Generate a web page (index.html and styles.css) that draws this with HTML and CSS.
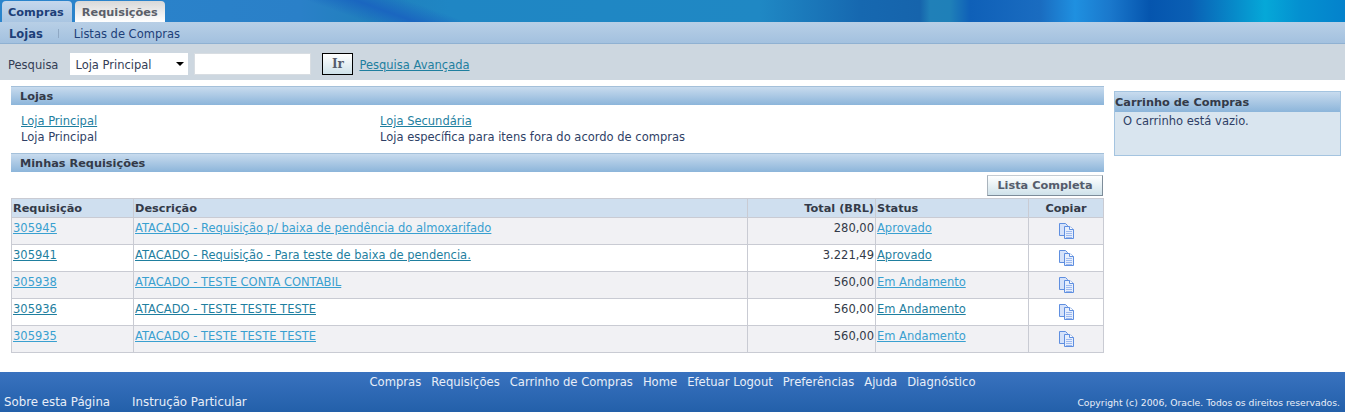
FILE: index.html
```html
<!doctype html>
<html>
    <head>
        <meta http-equiv="Content-Type" content="text/html; charset=utf-8">
        <title>Compras</title>
        <link rel="stylesheet" href="styles.css">
    </head>
    <body>
        <svg class="sprites" width="0" height="0">
            <symbol id="copy" viewBox="0 0 15 16">
                <path d="M.5.500h6l2 2v10h-8z" fill="#d5e2fa" stroke="#5f8fe0"/>
                <path d="M5.500 3.500h5l4 3v9h-9z" fill="#e6eefc" stroke="#5f8fe0"/>
                <path d="M10.500 3.500v3h4" fill="#fff" stroke="#5f8fe0"/>
                <path d="M7 8.500h6M7 10.500h6M7 12.500h6M7 14.500h6" stroke="#9db9ee"/>
            </symbol>
        </svg>
        <div class="top">
            <a class="tab tab-on">Compras</a>
            <a class="tab">Requisições</a>
        </div>
        <div class="subnav">
            <a class="sub-on">Lojas</a>
            <span class="sep"></span>
            <a>Listas de Compras</a>
        </div>
        <div class="search">
            <label>Pesquisa</label>
            <div class="select">Loja Principal<span class="arrow"></span></div>
            <input class="field" type="text">
            <button class="go">Ir</button>
            <a class="link">Pesquisa Avançada</a>
        </div>
        <div class="main">
            <div class="content">
                <h2 class="head">Lojas</h2>
                <div class="stores">
                    <div class="store">
                        <a class="link">Loja Principal</a>
                        <p>Loja Principal</p>
                    </div>
                    <div class="store">
                        <a class="link">Loja Secundária</a>
                        <p>Loja específica para itens fora do acordo de compras</p>
                    </div>
                </div>
                <h2 class="head">Minhas Requisições</h2>
                <div class="actions">
                    <button class="full">Lista Completa</button>
                </div>
                <table class="reqs">
                    <colgroup>
                        <col class="c1"><col class="c2"><col class="c3"><col class="c4"><col class="c5">
                    </colgroup>
                    <tr>
                        <th>Requisição</th><th>Descrição</th><th class="num">Total (BRL)</th><th>Status</th><th class="mid">Copiar</th>
                    </tr>
                    <tr class="odd">
                        <td><a class="light">305945</a></td>
                        <td><a class="light">ATACADO - Requisição p/ baixa de pendência do almoxarifado</a></td>
                        <td class="num">280,00</td>
                        <td><a class="light">Aprovado</a></td>
                        <td class="mid"><svg class="icon"><use href="#copy"/></svg></td>
                    </tr>
                    <tr>
                        <td><a class="link">305941</a></td>
                        <td><a class="link">ATACADO - Requisição - Para teste de baixa de pendencia.</a></td>
                        <td class="num">3.221,49</td>
                        <td><a class="link">Aprovado</a></td>
                        <td class="mid"><svg class="icon"><use href="#copy"/></svg></td>
                    </tr>
                    <tr class="odd">
                        <td><a class="light">305938</a></td>
                        <td><a class="light">ATACADO - TESTE CONTA CONTABIL</a></td>
                        <td class="num">560,00</td>
                        <td><a class="light">Em Andamento</a></td>
                        <td class="mid"><svg class="icon"><use href="#copy"/></svg></td>
                    </tr>
                    <tr>
                        <td><a class="link">305936</a></td>
                        <td><a class="link">ATACADO - TESTE TESTE TESTE</a></td>
                        <td class="num">560,00</td>
                        <td><a class="link">Em Andamento</a></td>
                        <td class="mid"><svg class="icon"><use href="#copy"/></svg></td>
                    </tr>
                    <tr class="odd">
                        <td><a class="light">305935</a></td>
                        <td><a class="light">ATACADO - TESTE TESTE TESTE</a></td>
                        <td class="num">560,00</td>
                        <td><a class="light">Em Andamento</a></td>
                        <td class="mid"><svg class="icon"><use href="#copy"/></svg></td>
                    </tr>
                </table>
            </div>
            <div class="cart">
                <h3>Carrinho de Compras</h3>
                <p>O carrinho está vazio.</p>
            </div>
        </div>
        <div class="footer">
            <div class="foot-nav">
                <a>Compras</a><a>Requisições</a><a>Carrinho de Compras</a><a>Home</a><a>Efetuar Logout</a><a>Preferências</a><a>Ajuda</a><a>Diagnóstico</a>
            </div>
            <div class="foot-row">
                <div class="foot-left">
                    <a>Sobre esta Página</a>
                    <a>Instrução Particular</a>
                </div>
                <div class="copy">Copyright (c) 2006, Oracle. Todos os direitos reservados.</div>
            </div>
        </div>
    </body>
</html>
```

FILE: styles.css
```css
body{
    margin: 0;
    width: 1345px;
    font-family: "DejaVu Sans", sans-serif;
    font-size: 11.5px;
    color: #2f3f66;
}
.sprites{
    position: absolute;
}
.top{
    height: 22px;
    padding-left: 2px;
    display: flex;
    align-items: flex-end;
    gap: 3px;
    background:
        linear-gradient(20deg, transparent 125px, #1a66c0 142px, transparent 160px),
        linear-gradient(90deg, #2a84cc 0, #2a80c8 300px, #2080bc 370px, #1f86c4 450px, #1f88c4 760px, #1668b0 860px, #1664ac 920px, #2080b8 930px, #1f80b8 950px, #0f60b8 970px, #1a6cc0 1040px, #1f90e0 1075px, #1a78cc 1110px, #0555ae 1150px, #0a5fb4 1190px, #05a8d8 1265px, #0490d0 1300px, #0482cc 1345px);
}
.tab{
    height: 21px;
    line-height: 23px;
    padding: 0 7px;
    border-radius: 4px 4px 0 0;
    font-weight: bold;
    font-size: 11.3px;
    color: #5a5f6a;
    background: linear-gradient(#d8d8d8, #fff);
}
.tab-on{
    padding: 0 8px 0 6px;
    color: #1d3f78;
    background: linear-gradient(#c4d7ec, #a9c5e2);
}
.subnav{
    height: 19px;
    border-bottom: 1px solid #8fb1d2;
    padding: 2px 0 0 9px;
    display: flex;
    align-items: center;
    background: linear-gradient(#b8cfe6, #a3c1df);
    color: #1d3f78;
}
.sub-on{
    font-weight: bold;
}
.sep{
    width: 1px;
    height: 9px;
    margin: 0 15px;
    background: #8fa8c4;
}
.search{
    height: 36px;
    padding: 4px 0 0 8px;
    box-sizing: border-box;
    display: flex;
    align-items: center;
    background: #cdd7e0;
    color: #333d55;
}
.search label, .search .link{
    margin-top: 2px;
}
.select{
    width: 118px;
    height: 22px;
    line-height: 24px;
    margin-left: 12px;
    padding-left: 5px;
    box-sizing: border-box;
    background: #fff;
    position: relative;
}
.arrow{
    position: absolute;
    right: 4px;
    top: 9px;
    border: 4px solid transparent;
    border-top-color: #000;
}
.field{
    width: 117px;
    height: 22px;
    margin: 0 0 0 6px;
    padding: 0;
    box-sizing: border-box;
    border: 1px solid #d8dde2;
    background: #fff;
}
.go{
    width: 31px;
    height: 22px;
    margin: 0 6px 0 11px;
    padding: 0;
    border: 1px solid #000;
    font: bold 12px "DejaVu Serif", serif;
    color: #555c6c;
    background: linear-gradient(#fff, #cfe2ea);
}
.link{
    color: #1f7f9f;
    text-decoration: underline;
}
.light{
    color: #39a0d0;
    text-decoration: underline;
}
.main{
    display: flex;
    height: 292px;
    padding-left: 11px;
}
.content{
    width: 1093px;
    padding-top: 6px;
}
.head{
    height: 18px;
    line-height: 20px;
    margin: 0;
    padding-left: 9px;
    border-top: 1px solid #a4c0da;
    font-size: 11.3px;
    color: #333a48;
    background: linear-gradient(#c8dbee, #8cb5da);
}
.stores{
    height: 48px;
    padding: 8px 0 0 10px;
    box-sizing: border-box;
    display: flex;
    line-height: 16px;
}
.store{
    width: 359px;
}
.store p{
    margin: 0;
}
.actions{
    height: 26px;
    padding: 3px 1px 0 0;
    box-sizing: border-box;
    display: flex;
    justify-content: flex-end;
}
.full{
    width: 116px;
    height: 21px;
    padding: 0;
    border: 1px solid #7d8c99;
    border-top-color: #c5ccd2;
    border-left-color: #aab4bd;
    font: bold 11.3px "DejaVu Sans", sans-serif;
    color: #555c6c;
    background: linear-gradient(#fff, #cfe2ea);
}
.reqs{
    width: 1093px;
    height: 155px;
    border-collapse: collapse;
    table-layout: fixed;
}
.c1{
    width: 122px;
}
.c2{
    width: 614px;
}
.c3{
    width: 128px;
}
.c4{
    width: 153px;
}
.reqs th, .reqs td{
    border: 1px solid #c9cbd3;
    padding: 1px 1px 0;
    text-align: left;
    vertical-align: top;
}
.reqs th{
    height: 17px;
    line-height: 17px;
    font-size: 11.3px;
    color: #333a48;
    background: #cfdfef;
}
.reqs td{
    height: 25px;
    line-height: 18px;
    color: #333a48;
}
.reqs .num{
    text-align: right;
}
.reqs .mid{
    text-align: center;
}
.odd td{
    background: #f1f1f4;
}
.icon{
    display: block;
    width: 15px;
    height: 16px;
    margin: 4px auto 0;
}
.cart{
    width: 227px;
    height: 65px;
    margin: 11px 0 0 10px;
    box-sizing: border-box;
    border: 1px solid #a4c4e0;
    background: #d9e5ef;
}
.cart h3{
    height: 20px;
    line-height: 22px;
    margin: 0;
    font-size: 11.3px;
    color: #333a48;
    background: linear-gradient(#c8dbee, #8cb5da);
}
.cart p{
    margin: 0;
    padding: 1px 0 0 8px;
    line-height: 16px;
}
.footer{
    height: 40px;
    background: linear-gradient(#3972bf, #2360aa);
    color: #e8eef8;
    font-size: 11.6px;
}
.foot-nav{
    height: 20px;
    display: flex;
    justify-content: center;
    align-items: center;
    gap: 10px;
}
.foot-row{
    height: 20px;
    padding: 0 5px 0 4px;
    display: flex;
    justify-content: space-between;
    align-items: center;
}
.foot-left{
    display: flex;
    gap: 22px;
    font-size: 11.8px;
}
.copy{
    font-size: 9.25px;
}
```
